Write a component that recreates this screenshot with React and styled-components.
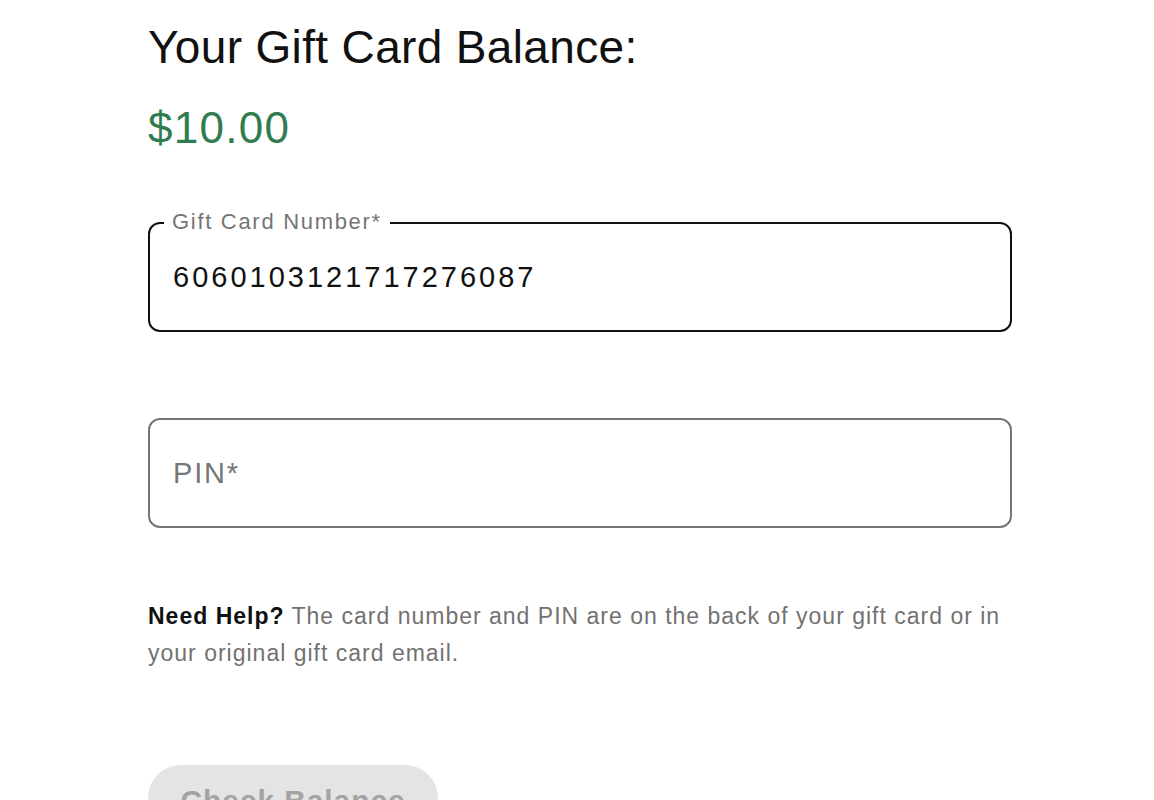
import React from "react";
import styled, { createGlobalStyle } from "styled-components";

const Global = createGlobalStyle`
  html, body { margin: 0; padding: 0; background: #fff; }
  body { font-family: "Liberation Sans", Arial, sans-serif; color: #111; }
  * { box-sizing: border-box; }
`;

const Page = styled.main`
  width: 864px;
  margin-left: 148px;
  padding-top: 20px;
  display: flex;
  flex-direction: column;
  align-items: flex-start;
`;

const Title = styled.h1`
  margin: 0;
  font-size: 46px;
  line-height: 55px;
  font-weight: 400;
  letter-spacing: 0.35px;
  color: #111;
`;

const Balance = styled.div`
  margin-top: 29px;
  font-size: 44px;
  line-height: 48px;
  color: #317c4f;
  letter-spacing: 1.3px;
`;

const Field = styled.div`
  position: relative;
  align-self: stretch;
  margin-top: ${(p) => p.$top}px;
  height: 110px;
  border: 2px solid ${(p) => (p.$filled ? "#111" : "#767676")};
  border-radius: 12px;
  display: flex;
  align-items: center;
  padding-left: 23px;
`;

const FloatLabel = styled.span`
  position: absolute;
  top: -15px;
  left: 14px;
  padding: 0 8px;
  background: #fff;
  font-size: 22px;
  line-height: 26px;
  letter-spacing: 1.7px;
  color: #757575;
`;

const Value = styled.span`
  font-size: 29px;
  letter-spacing: 3px;
  color: #111;
  padding-top: 1px;
`;

const Placeholder = styled.span`
  font-size: 29px;
  letter-spacing: 1.8px;
  color: #767676;
  padding-top: 1px;
`;

const Help = styled.p`
  margin: 70px 0 0;
  font-size: 23px;
  line-height: 37px;
  letter-spacing: 1px;
  color: #727272;
`;

const Strong = styled.strong`
  font-weight: 700;
  color: #111;
`;

const Button = styled.button`
  margin-top: 93px;
  width: 290px;
  height: 66px;
  padding: 6px 0 0;
  border: none;
  border-radius: 33px;
  background: #e4e4e4;
  color: #a3a3a3;
  font-family: "Liberation Sans", Arial, sans-serif;
  font-size: 30px;
  font-weight: 700;
  letter-spacing: 0.9px;
  cursor: not-allowed;
`;

export default function App() {
  return (
    <>
      <Global />
      <Page>
        <Title>Your Gift Card Balance:</Title>
        <Balance>$10.00</Balance>
        <Field $filled $top={70}>
          <FloatLabel>Gift Card Number*</FloatLabel>
          <Value>6060103121717276087</Value>
        </Field>
        <Field $top={86}>
          <Placeholder>PIN*</Placeholder>
        </Field>
        <Help>
          <Strong>Need Help?</Strong> The card number and PIN are on the back of your gift card or in your original gift card email.
        </Help>
        <Button disabled>Check Balance</Button>
      </Page>
    </>
  );
}
